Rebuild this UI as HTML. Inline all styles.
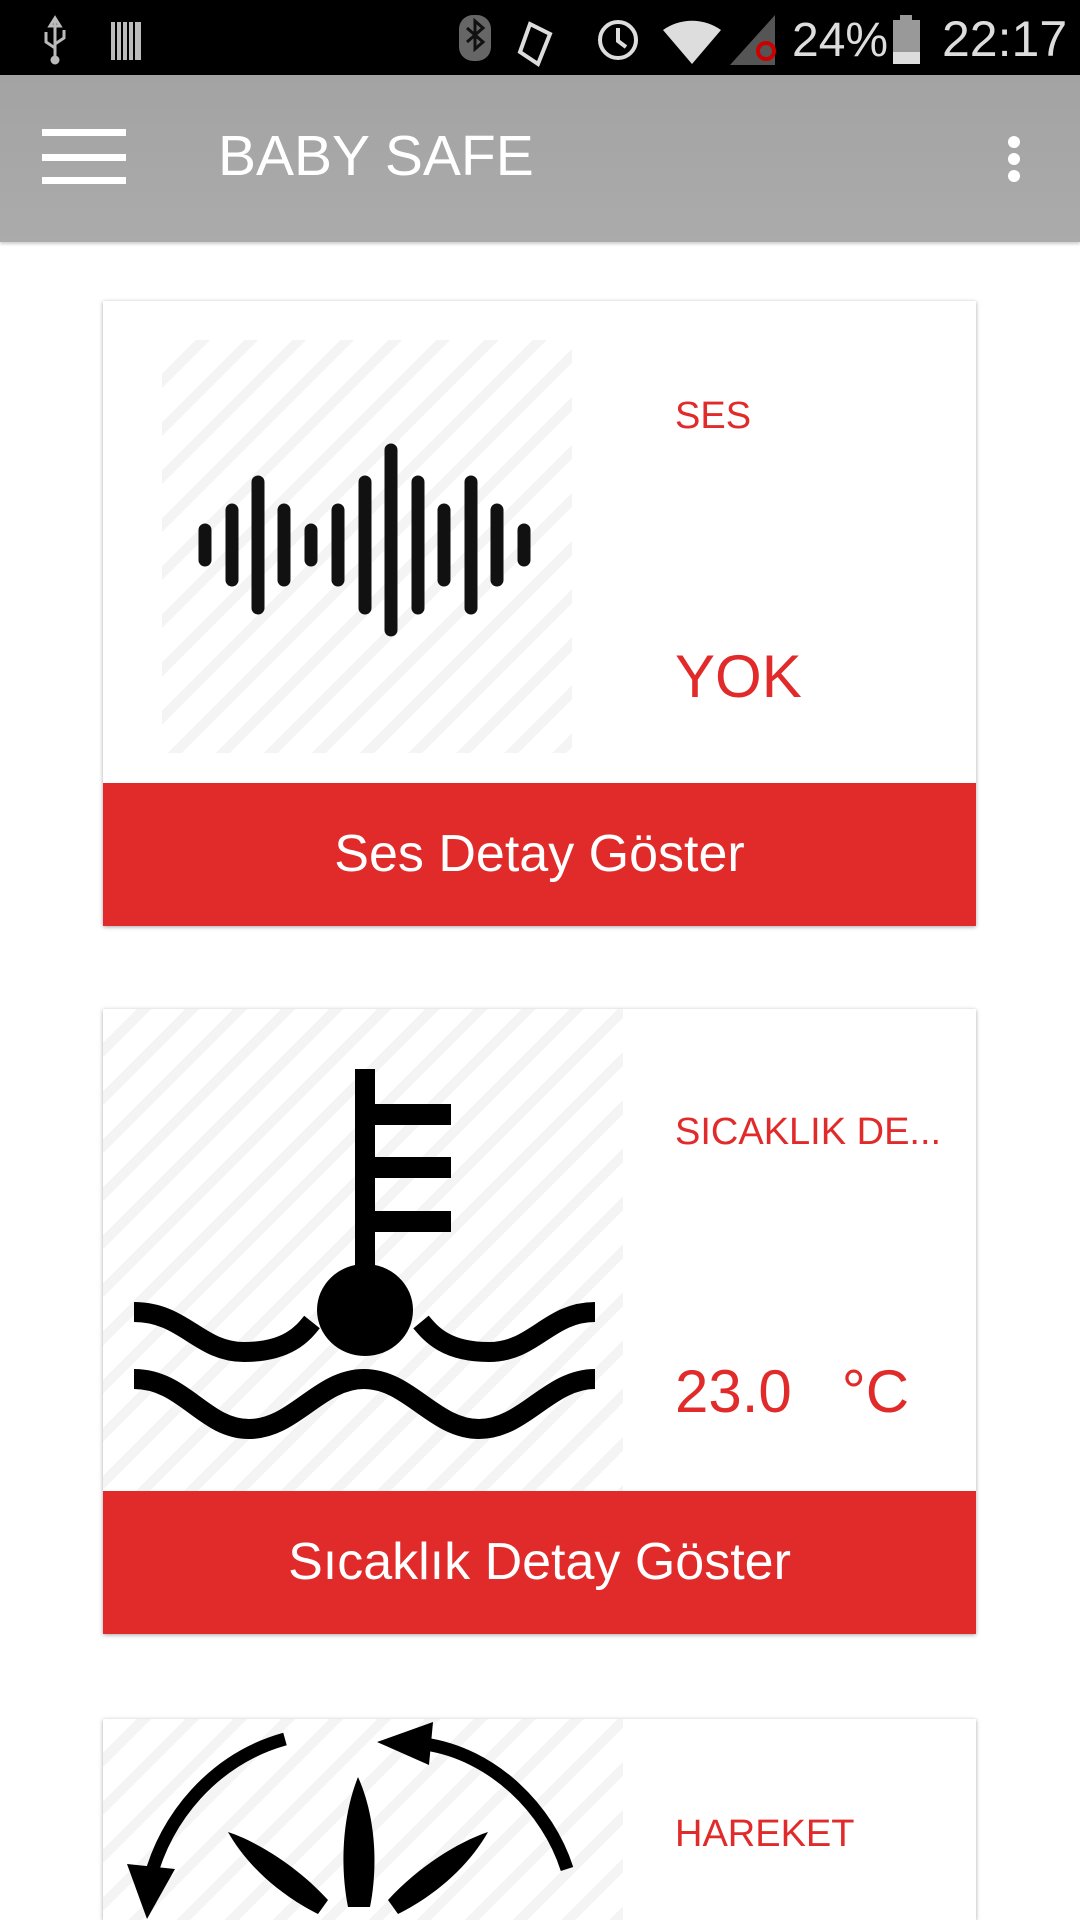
<!DOCTYPE html>
<html style="width:1080px;height:1920px;overflow:hidden"><head><meta charset="utf-8"><style>
*{margin:0;padding:0;box-sizing:border-box}
body{width:1080px;height:1920px;overflow:hidden;background:#fff;font-family:"Liberation Sans",sans-serif;position:relative}
.abs{position:absolute}
.status{left:0;top:0;width:1080px;height:75px;background:#000}
.bar{left:0;top:75px;width:1080px;height:167px;background:linear-gradient(#a3a3a3,#ababab);box-shadow:0 2px 3px rgba(0,0,0,.2)}
.card{left:103px;width:873px;height:625px;background:#fff;box-shadow:0 1px 4px rgba(0,0,0,.35);overflow:hidden}
.btn{position:absolute;left:0;bottom:0;width:100%;height:143px;background:#e12a2a;color:#fff;font-size:52px;text-align:center;line-height:143px}
.lbl{position:absolute;color:#e12a2a;white-space:nowrap}
.stripe{position:absolute;background:repeating-linear-gradient(135deg,#fff 0 24px,#f4f4f4 24px 34px)}
</style></head><body>
<div class="abs status">
<svg width="1080" height="75" style="position:absolute;left:0;top:0">
 <g fill="#bbb" stroke="#bbb">
  <path d="M55 18v40M55 18l-5 8h10zM46 32v10l9 6M64 30v8l-9 6" fill="none" stroke-width="3"/>
  <circle cx="55" cy="60" r="4"/>
  <rect x="111" y="22" width="30" height="38" stroke="none"/>
 </g>
 <g stroke="#000" stroke-width="2"><path d="M116 22v38M122 22v38M128 22v38M134 22v38"/></g>
 <rect x="459" y="15" width="32" height="46" rx="14" fill="#666"/>
 <path d="M467 28l16 14-8 7V21l8 7-16 14" stroke="#111" stroke-width="3" fill="none"/>
 <path d="M530 24l-10 28 18 12 12-30z" stroke="#ddd" stroke-width="4" fill="none"/>
 <circle cx="618" cy="40" r="18" stroke="#ddd" stroke-width="4" fill="none"/><path d="M618 28v13l8 6" stroke="#ddd" stroke-width="4" fill="none"/>
 <path d="M663 30a50 50 0 0 1 58 0L692 64z" fill="#ddd"/>
 <path d="M730 65L775 15V65z" fill="#555"/><circle cx="766" cy="51" r="8" stroke="#c00" stroke-width="4" fill="none"/>
 <text x="792" y="56" font-size="48" fill="#ddd" font-family="Liberation Sans">24%</text>
 <rect x="893" y="20" width="27" height="44" fill="#999"/><rect x="900" y="15" width="12" height="6" fill="#999"/><rect x="893" y="52" width="27" height="12" fill="#ddd"/>
 <text x="942" y="56" font-size="50" fill="#ddd" font-family="Liberation Sans">22:17</text>
</svg>
</div>
<div class="abs bar">
 <div class="abs" style="left:42px;top:54px;width:84px;height:7px;background:#fff"></div>
 <div class="abs" style="left:42px;top:79px;width:84px;height:7px;background:#fff"></div>
 <div class="abs" style="left:42px;top:102px;width:84px;height:7px;background:#fff"></div>
 <div class="abs" style="left:218px;top:53px;font-size:57px;color:#fff;line-height:1">BABY SAFE</div>
 <div class="abs" style="left:1008px;top:61px;width:12px;height:12px;border-radius:6px;background:#fff"></div>
 <div class="abs" style="left:1008px;top:78px;width:12px;height:12px;border-radius:6px;background:#fff"></div>
 <div class="abs" style="left:1008px;top:95px;width:12px;height:12px;border-radius:6px;background:#fff"></div>
</div>

<div class="abs card" style="top:301px">
 <div class="stripe" style="left:59px;top:39px;width:410px;height:413px"></div>
 <svg class="abs" style="left:0;top:0" width="873" height="482">
  <g stroke="#111" stroke-width="13" stroke-linecap="round">
   <path d="M102 229v30M129 209v70M155 181v126M181 209v70M208 229v30M235 209v70M262 181v126M288 149v180M315 181v126M341 209v70M368 181v126M394 209v70M421 229v30"/>
  </g>
 </svg>
 <div class="lbl" style="left:572px;top:94px;font-size:38px">SES</div>
 <div class="lbl" style="left:572px;top:341px;font-size:60px">YOK</div>
 <div class="btn">Ses Detay Göster</div>
</div>

<div class="abs card" style="top:1009px">
 <div class="stripe" style="left:0;top:0;width:520px;height:482px"></div>
 <svg class="abs" style="left:0;top:0" width="873" height="482">
  <rect x="252" y="60" width="20" height="200" fill="#000"/>
  <rect x="270" y="95" width="78" height="21" fill="#000"/>
  <rect x="270" y="148" width="78" height="21" fill="#000"/>
  <rect x="270" y="202" width="78" height="21" fill="#000"/>
  <ellipse cx="262" cy="301" rx="48" ry="46" fill="#000"/>
  <g stroke="#000" stroke-width="20" fill="none">
   <path d="M31 303c50 0 65 40 110 40s60-20 68-30"/>
   <path d="M318 313c10 12 25 30 68 30 45 0 60-40 106-40"/>
   <path d="M31 370c50 0 70 50 115 50s70-50 115-50 70 50 115 50 70-50 116-50"/>
  </g>
 </svg>
 <div class="lbl" style="left:572px;top:102px;font-size:38px">SICAKLIK DE...</div>
 <div class="lbl" style="left:572px;top:348px;font-size:60px">23.0&nbsp;&nbsp; °C</div>
 <div class="btn">Sıcaklık Detay Göster</div>
</div>

<div class="abs card" style="top:1719px;height:201px">
 <div class="stripe" style="left:0;top:0;width:520px;height:201px"></div>
 <svg class="abs" style="left:0;top:0" width="873" height="201">
  <g fill="none" stroke="#000" stroke-width="13">
   <path d="M182 20C110 40 62 100 47 160"/>
   <path d="M322 25C390 35 445 90 464 150"/>
  </g>
  <path d="M24 145l48 5-28 50z" fill="#000"/>
  <path d="M274 23l56-20-4 43z" fill="#000"/>
  <path d="M255 58c-16 40-18 90-10 130h22c8-40 6-90-12-130z" fill="#000"/>
  <path d="M125 113c30 10 70 35 100 68l-10 14c-40-20-72-50-90-82z" fill="#000"/>
  <path d="M385 113c-30 10-70 35-100 68l10 14c40-20 72-50 90-82z" fill="#000"/>
  <circle cx="255" cy="232" r="30" fill="#000"/>
 </svg>
 <div class="lbl" style="left:572px;top:94px;font-size:38px">HAREKET</div>
</div>
</body></html>
